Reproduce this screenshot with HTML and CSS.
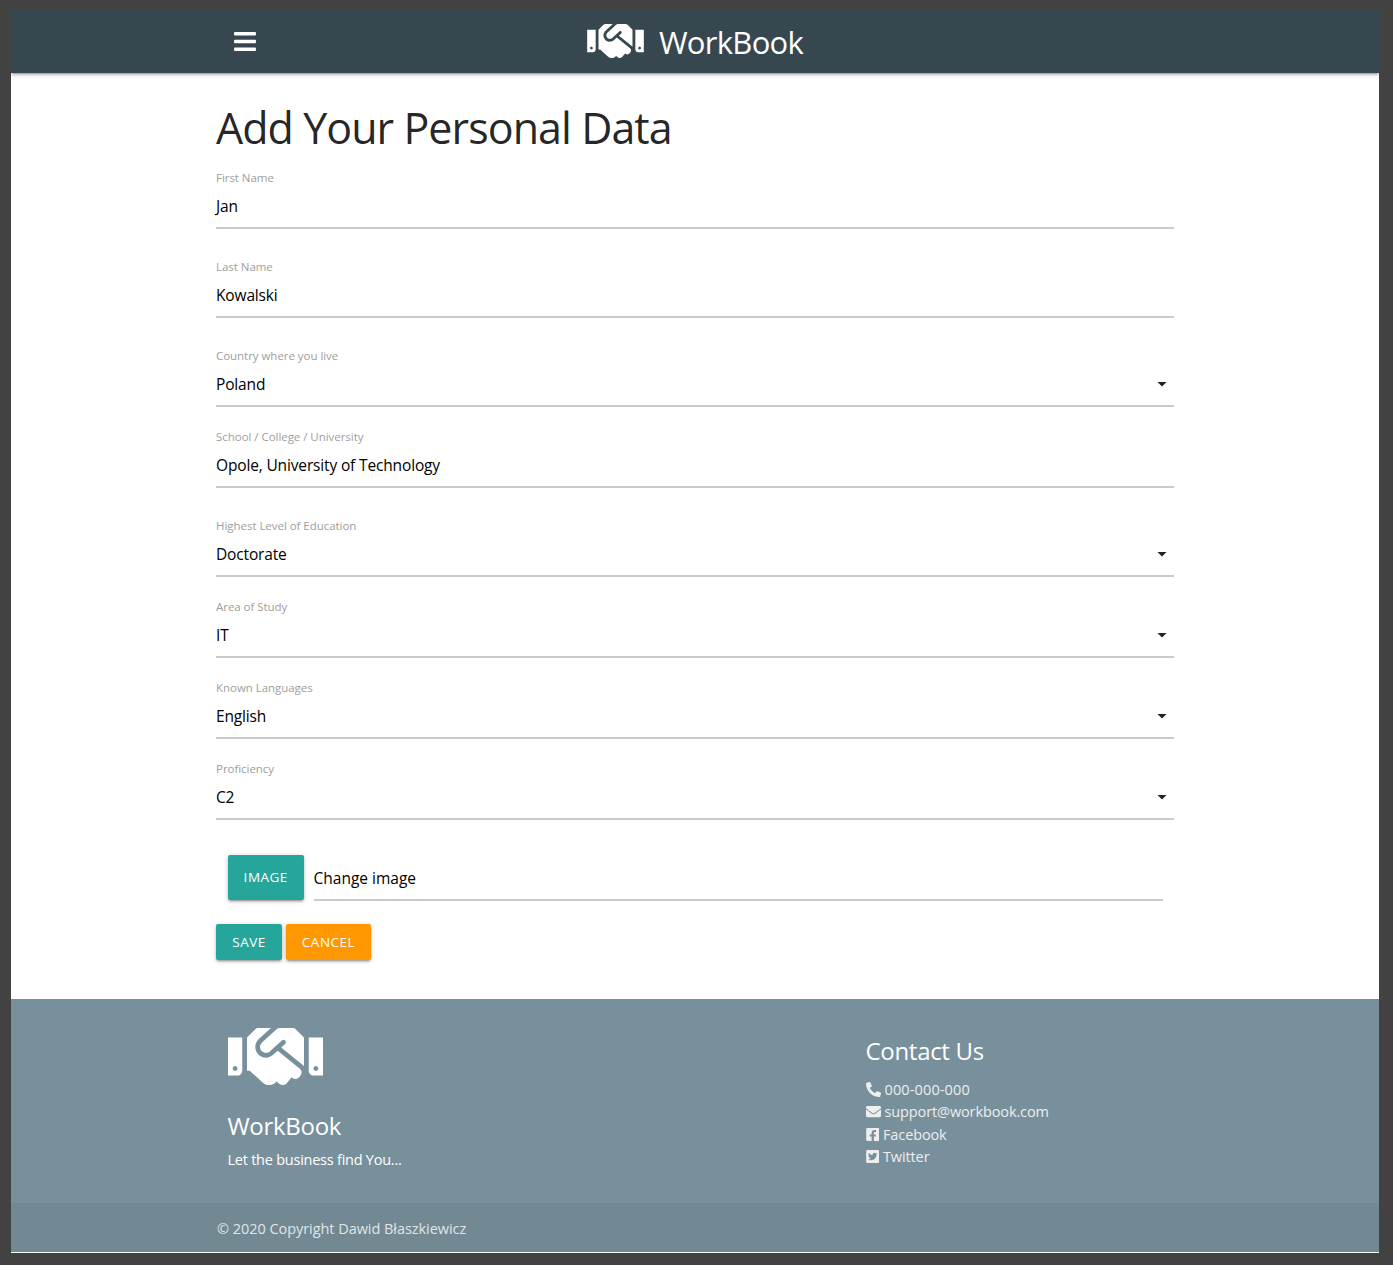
FILE: index.html
```html
<!DOCTYPE html>
<html lang="en">
<head>
<meta charset="utf-8">
<title>WorkBook</title>
<link rel="stylesheet" href="styles.css">
</head>
<body>
<svg class="sprite" aria-hidden="true">
  <symbol id="handshake" viewBox="0 64 640 384"><path d="M434.7 64h-85.9c-8 0-15.7 3-21.6 8.4l-98.3 90c-.1.1-.2.3-.3.4-16.6 15.6-16.3 40.5-2.1 56 12.7 13.9 39.4 17.6 56.1 2.7.1-.1.3-.1.4-.2l79.9-73.2c6.5-5.9 16.7-5.5 22.6 1 6 6.5 5.5 16.6-1 22.6l-26.1 23.9L504 313.8c2.9 2.4 5.5 5 7.9 7.7V128l-54.6-54.6c-5.9-6-14.1-9.4-22.6-9.4zM544 128.2v223.9c0 17.7 14.3 32 32 32h64V128.2h-96zm48 223.9c-8.8 0-16-7.2-16-16s7.2-16 16-16 16 7.2 16 16-7.2 16-16 16zM0 384h64c17.7 0 32-14.3 32-32V128.2H0V384zm48-63.9c8.8 0 16 7.2 16 16s-7.2 16-16 16-16-7.2-16-16c0-8.9 7.2-16 16-16zm435.9 18.6L334.6 217.5l-30 27.5c-29.7 27.1-75.2 24.5-101.7-4.4-26.9-29.4-24.8-74.9 4.4-101.7L289.1 64h-83.8c-8.5 0-16.6 3.4-22.6 9.4L128 128v223.9h18.3l90.5 81.9c27.4 22.3 67.7 18.1 90-9.3l.2-.2 17.9 15.5c15.9 13 39.4 10.5 52.3-5.4l31.4-38.6 5.4 4.4c13.7 11.1 33.9 9.1 45-4.7l9.5-11.7c11.2-13.8 9.1-33.9-4.6-45.1z"/></symbol>
</svg>
<div class="page">
  <header class="navbar">
    <div class="container navbar-inner">
      <a class="menu" aria-label="Menu"><svg viewBox="0 0 448 512"><path d="M16 132h416c8.8 0 16-7.2 16-16V76c0-8.8-7.2-16-16-16H16C7.2 60 0 67.2 0 76v40c0 8.8 7.2 16 16 16zm0 160h416c8.8 0 16-7.2 16-16v-40c0-8.8-7.2-16-16-16H16c-8.8 0-16 7.2-16 16v40c0 8.8 7.2 16 16 16zm0 160h416c8.8 0 16-7.2 16-16v-40c0-8.8-7.2-16-16-16H16c-8.8 0-16 7.2-16 16v40c0 8.8 7.2 16 16 16z"/></svg></a>
      <a class="brand"><svg><use href="#handshake"/></svg><span class="brand-name">WorkBook</span></a>
    </div>
  </header>
  <main class="container">
    <h1>Add Your Personal Data</h1>
    <form class="form">
      <div class="field"><label>First Name</label><div class="value"><span>Jan</span></div></div>
      <div class="field spaced"><label>Last Name</label><div class="value"><span>Kowalski</span></div></div>
      <div class="field spaced"><label>Country where you live</label><div class="value select"><span>Poland</span><i class="caret"></i></div></div>
      <div class="field"><label>School / College / University</label><div class="value"><span>Opole, University of Technology</span></div></div>
      <div class="field spaced"><label>Highest Level of Education</label><div class="value select"><span>Doctorate</span><i class="caret"></i></div></div>
      <div class="field"><label>Area of Study</label><div class="value select"><span>IT</span><i class="caret"></i></div></div>
      <div class="field"><label>Known Languages</label><div class="value select"><span>English</span><i class="caret"></i></div></div>
      <div class="field"><label>Proficiency</label><div class="value select"><span>C2</span><i class="caret"></i></div></div>
      <div class="file">
        <a class="btn btn-file">IMAGE</a>
        <div class="value file-path"><span>Change image</span></div>
      </div>
      <div class="actions">
        <a class="btn btn-save">SAVE</a>
        <a class="btn btn-cancel">CANCEL</a>
      </div>
    </form>
  </main>
  <footer class="footer">
    <div class="container footer-main">
      <section class="about">
        <svg class="footer-logo"><use href="#handshake"/></svg>
        <h2>WorkBook</h2>
        <p>Let the business find You...</p>
      </section>
      <section class="contact">
        <h2>Contact Us</h2>
        <ul>
          <li class="phone"><svg class="wide" viewBox="0 0 512 512"><path d="M497.39 361.8l-112-48a24 24 0 0 0-28 6.9l-49.6 60.6A370.66 370.66 0 0 1 130.6 204.11l60.6-49.6a23.94 23.94 0 0 0 6.9-28l-48-112A24.16 24.16 0 0 0 122.6.61l-104 24A24 24 0 0 0 0 48c0 256.5 207.9 464 464 464a24 24 0 0 0 23.4-18.6l24-104a24.29 24.29 0 0 0-14.01-27.6z"/></svg><span>000-000-000</span></li>
          <li><svg class="wide" viewBox="0 0 512 512"><path d="M502.3 190.8c3.9-3.1 9.7-.2 9.7 4.7V400c0 26.5-21.5 48-48 48H48c-26.5 0-48-21.5-48-48V195.6c0-5 5.7-7.8 9.7-4.7 22.4 17.4 52.1 39.5 154.1 113.6 21.1 15.4 56.7 47.8 92.2 47.6 35.7.3 72-32.8 92.3-47.6 102-74.1 131.6-96.3 154-113.7zM256 320c23.2.4 56.6-29.2 73.4-41.4 132.7-96.3 142.8-104.7 173.4-128.7 5.8-4.5 9.2-11.5 9.2-18.9v-19c0-26.5-21.5-48-48-48H48c-26.5 0-48 21.5-48 48v19c0 7.4 3.4 14.3 9.2 18.9 30.6 23.9 40.7 32.4 173.4 128.7 16.8 12.2 50.2 41.8 73.4 41.4z"/></svg><span>support@workbook.com</span></li>
          <li><svg viewBox="0 0 448 512"><path d="M400 32H48A48 48 0 0 0 0 80v352a48 48 0 0 0 48 48h137.25V327.69h-63V256h63v-54.64c0-62.15 37-96.48 93.67-96.48 27.14 0 55.52 4.84 55.52 4.84v61h-31.27c-30.81 0-40.42 19.12-40.42 38.73V256h68.78l-11 71.69h-57.78V480H400a48 48 0 0 0 48-48V80a48 48 0 0 0-48-48z"/></svg><span>Facebook</span></li>
          <li><svg viewBox="0 0 448 512"><path d="M400 32H48C21.5 32 0 53.5 0 80v352c0 26.5 21.5 48 48 48h352c26.5 0 48-21.5 48-48V80c0-26.5-21.5-48-48-48zm-48.9 158.8c.2 2.8.2 5.7.2 8.5 0 86.7-66 186.6-186.6 186.6-37.2 0-71.7-10.8-100.7-29.4 5.3.6 10.4.8 15.8.8 30.7 0 58.9-10.4 81.4-28-28.8-.6-53-19.5-61.3-45.5 10.1 1.5 19.2 1.5 29.6-1.2-30-6.1-52.5-32.5-52.5-64.4v-.8c8.7 4.9 18.9 7.9 29.6 8.3a65.447 65.447 0 0 1-29.2-54.6c0-12.2 3.2-23.4 8.9-33.1 32.3 39.8 80.8 65.8 135.2 68.6-9.3-44.5 24-80.6 64-80.6 18.9 0 35.9 7.9 47.9 20.7 14.8-2.8 29-8.3 41.6-15.8-4.9 15.2-15.2 28-28.8 36.1 13.2-1.4 26-5.1 37.8-10.2-8.9 13.1-20.1 24.7-32.9 34z"/></svg><span>Twitter</span></li>
        </ul>
      </section>
    </div>
    <div class="copyright"><div class="container">© 2020 Copyright Dawid Błaszkiewicz</div></div>
  </footer>
</div>
</body>
</html>
```
FILE: styles.css
```css
* { box-sizing: border-box; }
body {
  margin: 0;
  padding: 9px 14px 12px 11px;
  height: 1265px;
  background: #424242;
  font-family: "Open Sans", "Noto Sans", sans-serif;
  font-size: 15.5px;
  color: rgba(0, 0, 0, 0.87);
}
.sprite { display: none; }
svg { display: block; fill: currentColor; }
.page { height: 1244px; background: #fff; }
.container { width: 958px; margin-left: 205px; }

.navbar {
  height: 64px;
  background: #37474f;
  color: #fff;
  box-shadow: 0 2px 2px rgba(0, 0, 0, 0.14), 0 3px 1px -2px rgba(0, 0, 0, 0.12), 0 1px 5px rgba(0, 0, 0, 0.2);
  clip-path: inset(0 0 -10px 0);
}
.navbar-inner { display: grid; grid-template-columns: 1fr auto 1fr; height: 64px; }
.menu { padding: 19.5px 0 0 18px; }
.menu svg { width: 22px; height: 25px; }
.brand { display: flex; }
.brand svg { width: 57px; height: 34px; margin: 15px 15px 0 0; }
.brand-name { font-size: 31px; line-height: 66px; letter-spacing: -0.7px; }

h1 { margin: 0; padding-top: 24px; height: 87px; font-size: 43px; font-weight: 400; line-height: 62px; letter-spacing: -0.95px; }
.field { height: 81px; display: flex; flex-direction: column; justify-content: flex-end; }
.field:first-child { height: 69px; }
.field.spaced { height: 89px; }
label { height: 20px; line-height: 20px; font-size: 11.5px; letter-spacing: -0.04px; color: #9e9e9e; }
.value {
  height: 41px;
  display: flex;
  justify-content: space-between;
  line-height: 37px;
  letter-spacing: -0.15px;
  border-bottom: 2px solid #cbcbcb;
  color: #000;
}
.caret { margin: 15.5px 7px 0 0; width: 10px; height: 5px; background: #212121; clip-path: polygon(0 0, 100% 0, 50% 100%); }

.btn {
  display: flex;
  justify-content: center;
  align-items: center;
  height: 36px;
  padding-left: 0.5px;
  border-radius: 2px;
  background: #26a69a;
  color: #fff;
  font-size: 13.5px;
  letter-spacing: 0.5px;
  box-shadow: 0 2px 2px rgba(0, 0, 0, 0.14), 0 3px 1px -2px rgba(0, 0, 0, 0.12), 0 1px 5px rgba(0, 0, 0, 0.2);
}
.file { display: flex; gap: 10px; padding: 34px 11px 0 11.5px; }
.btn-file { width: 76px; height: 45px; margin-top: 0.5px; }
.file-path { flex: 1; height: 47px; line-height: 48px; letter-spacing: 0; }
.actions { display: flex; gap: 4px; padding-top: 22.5px; }
.btn-save { width: 65.5px; }
.btn-cancel { width: 85.5px; background: #ff9800; }
main { height: 926px; }

.footer { background: #78909c; color: #fff; }
.footer-main { display: flex; height: 204px; padding-left: 11.5px; }
.about { width: 638px; }
.footer-logo { width: 95px; height: 57px; margin-top: 29px; }
h2 { margin: 0; font-size: 24px; font-weight: 400; line-height: 34px; letter-spacing: -0.3px; }
.about h2 { margin-top: 24px; }
.about p { margin: 0; padding-top: 5px; line-height: 24px; font-size: 14.5px; letter-spacing: -0.24px; }
.contact h2 { margin-top: 34.5px; }
.contact ul { margin: 10.5px 0 0; padding: 0; list-style: none; color: #eee; font-size: 14.5px; letter-spacing: -0.12px; }
.contact li { display: flex; align-items: center; height: 22.5px; }
.contact .phone { letter-spacing: 0.13px; }
.contact li svg { width: 13.5px; height: 15px; margin-right: 4px; }
.contact li svg.wide { width: 15px; }
.copyright { height: 49px; line-height: 51px; background: rgba(51, 51, 51, 0.08); color: rgba(255, 255, 255, 0.8); font-size: 14.5px; letter-spacing: -0.05px; }
.copyright .container { padding-left: 1px; }
```
